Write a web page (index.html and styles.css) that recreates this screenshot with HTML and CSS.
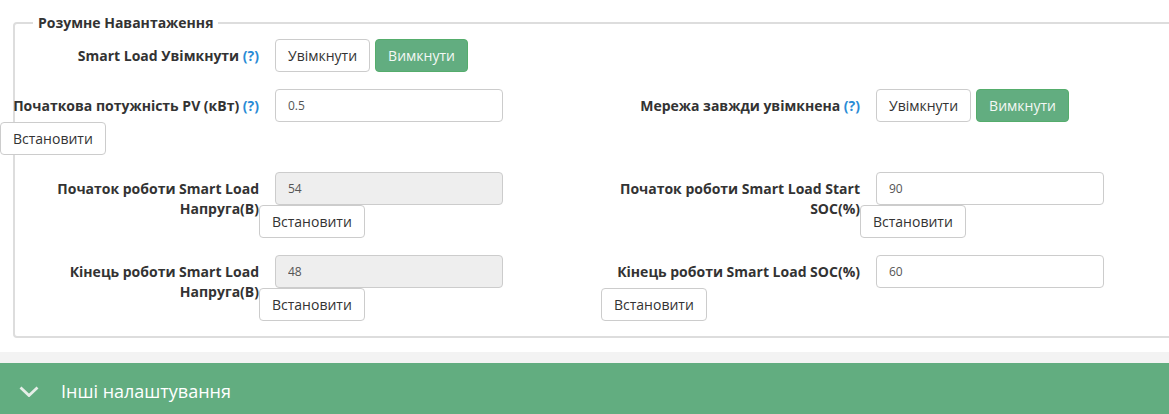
FILE: index.html
```html
<!DOCTYPE html>
<html lang="uk">
<head>
    <meta charset="UTF-8">
    <meta name="viewport" content="width=device-width, initial-scale=1.0">
    <title>Розумне Навантаження</title>
    <link rel="stylesheet" href="styles.css">
</head>
<body>
    <fieldset class="smart-load">
        <legend>Розумне Навантаження</legend>
        <div class="rows">
            <div class="row">
                <div class="col">
                    <div class="field">
                        <label class="field-label">Smart Load Увімкнути <span class="tip">(?)</span></label>
                        <div class="btn-group">
                            <button class="btn">Увімкнути</button>
                            <button class="btn btn-on">Вимкнути</button>
                        </div>
                    </div>
                </div>
            </div>

            <div class="row">
                <div class="col">
                    <div class="field">
                        <label class="field-label" for="pvPower">Початкова потужність PV (кВт) <span class="tip">(?)</span></label>
                        <div class="control"><input class="input" type="text" id="pvPower" value="0.5"></div>
                        <button class="btn">Встановити</button>
                    </div>
                </div>
                <div class="col">
                    <div class="field">
                        <label class="field-label">Мережа завжди увімкнена <span class="tip">(?)</span></label>
                        <div class="btn-group">
                            <button class="btn">Увімкнути</button>
                            <button class="btn btn-on">Вимкнути</button>
                        </div>
                    </div>
                </div>
            </div>

            <div class="row">
                <div class="col">
                    <div class="field">
                        <label class="field-label" for="startVolt">Початок роботи Smart Load Напруга(В)</label>
                        <div class="control"><input class="input" type="text" id="startVolt" value="54" disabled></div>
                        <button class="btn">Встановити</button>
                    </div>
                </div>
                <div class="col">
                    <div class="field">
                        <label class="field-label" for="startSoc">Початок роботи Smart Load Start SOC(%)</label>
                        <div class="control"><input class="input" type="text" id="startSoc" value="90"></div>
                        <button class="btn">Встановити</button>
                    </div>
                </div>
            </div>

            <div class="row">
                <div class="col">
                    <div class="field">
                        <label class="field-label" for="endVolt">Кінець роботи Smart Load Напруга(В)</label>
                        <div class="control"><input class="input" type="text" id="endVolt" value="48" disabled></div>
                        <button class="btn">Встановити</button>
                    </div>
                </div>
                <div class="col">
                    <div class="field">
                        <label class="field-label" for="endSoc">Кінець роботи Smart Load SOC(%)</label>
                        <div class="control"><input class="input" type="text" id="endSoc" value="60"></div>
                        <button class="btn">Встановити</button>
                    </div>
                </div>
            </div>
        </div>
    </fieldset>

    <div class="other">
        <div class="other-head">
            <svg class="chevron" width="20" height="11" viewBox="0 0 20 11">
                <polyline points="1.5,1.5 10,9.5 18.5,1.5" fill="none" stroke="#e6eee8" stroke-width="2.8"/>
            </svg>
            <span>Інші налаштування</span>
        </div>
    </div>
</body>
</html>
```

FILE: styles.css
```css
body {
    margin: 0;
    font-family: "Open Sans", "Liberation Sans", sans-serif;
    font-size: 14px;
    color: #333;
    background-color: #fff;
    overflow: hidden;
}
.smart-load {
    margin: 13px -20px 0 13px;
    padding: 6px 0 15px;
    border: 2px solid #ddd;
    border-radius: 4px;
    min-width: 0;
}
legend {
    margin-left: 18px;
    padding: 0 5px;
    font-weight: bold;
    line-height: 20px;
}
.rows {
    margin-left: -15px;
}
.row {
    display: flex;
}
.row + .row {
    margin-top: 17px;
}
.col {
    width: 601px;
    flex-shrink: 0;
}
.field {
    display: flow-root;
}
.field-label {
    float: left;
    width: 259px;
    padding-top: 7px;
    line-height: 20px;
    text-align: right;
    font-weight: bold;
}
.tip {
    color: #2a8bd5;
}
.control,
.btn-group {
    float: left;
    margin-left: 16px;
}
.btn-group {
    display: flex;
    gap: 5px;
}
.input {
    display: block;
    width: 228px;
    height: 33px;
    box-sizing: border-box;
    padding: 6px 12px;
    border: 1px solid #ccc;
    border-radius: 4px;
    font-family: "Open Sans", "Liberation Sans", sans-serif;
    font-size: 12px;
    color: #555;
    background-color: #fff;
}
.input:disabled {
    background-color: #eee;
}
.btn {
    height: 33px;
    box-sizing: border-box;
    padding: 6px 12px;
    vertical-align: top;
    border: 1px solid #ccc;
    border-radius: 4px;
    background-color: #fff;
    font-family: "Open Sans", "Liberation Sans", sans-serif;
    font-size: 14px;
    line-height: 19px;
    color: #333;
    cursor: pointer;
}
.btn-on {
    background-color: #62ad80;
    border-color: #55ad6c;
    color: #f4f8f5;
}
.other {
    margin-top: 14px;
    padding-top: 11px;
    background-color: #f3f3f3;
}
.other-head {
    display: flex;
    align-items: center;
    gap: 22px;
    padding: 16px 19px;
    background-color: #62ad80;
    color: #fff;
    font-size: 18px;
    line-height: 25px;
}
.chevron {
    flex-shrink: 0;
}
```
